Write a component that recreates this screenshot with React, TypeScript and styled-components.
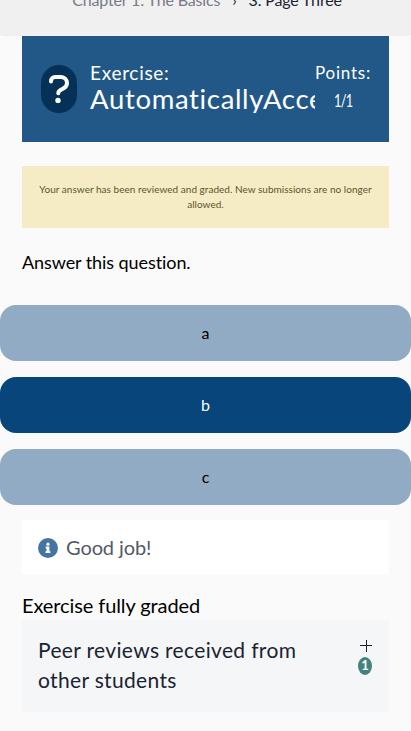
import React from "react";
import styled, { createGlobalStyle } from "styled-components";

const GlobalStyle = createGlobalStyle`
  * { box-sizing: border-box; }
  body {
    margin: 0;
    background: #fafafa;
    color: #000;
    font-family: Lato, "Open Sans", sans-serif;
    font-variant-ligatures: none;
  }
`;

const Page = styled.div`
  height: 731px;
  overflow: hidden;
  background: #fafafa;
`;

const Breadcrumbs = styled.nav`
  height: 36px;
  display: flex;
  justify-content: center;
  padding-left: 3px;
  background: #f0f0f0;
  border-radius: 0 0 3px 3px;
  font-size: 16px;
  line-height: 24px;
  letter-spacing: -0.16px;
  white-space: pre;
`;

const Crumb = styled.span<{ $muted?: boolean }>`
  margin-top: -12px;
  color: ${(p) => (p.$muted ? "#767b85" : "#1a2333")};
`;

const Separator = styled(Crumb)`
  margin-left: 12px;
  margin-right: 12px;
`;

const Content = styled.main`
  padding: 0 22px;
`;

const Header = styled.header`
  height: 106px;
  display: flex;
  align-items: center;
  padding: 0 18px 0 19px;
  background: #215887;
  color: #fff;
`;

const HelpBadge = styled.div`
  flex: none;
  width: 36px;
  height: 48px;
  margin-right: 13px;
  border-radius: 18px;
  background: #063157;
`;

const Heading = styled.h2`
  width: 225px;
  margin: -5px 0 0;
  overflow: hidden;
  white-space: nowrap;
  font-weight: 400;
`;

const Kind = styled.span`
  display: block;
  font-size: 19px;
  line-height: 23px;
  letter-spacing: 0.7px;
`;

const Name = styled.span`
  display: block;
  font-size: 27.5px;
  line-height: 29px;
  letter-spacing: 0.66px;
`;

const Points = styled.div`
  flex: none;
  width: 56px;
  display: flex;
  flex-direction: column;
  align-items: center;
  margin-top: -5px;
  font-size: 17px;
  line-height: 28px;
  letter-spacing: 0.8px;
  white-space: nowrap;
`;

const Score = styled.span`
  font-size: 17px;
  letter-spacing: -1px;
  transform: scaleX(0.75);
`;

const Notice = styled.p`
  height: 62px;
  margin: 24px 0 0;
  padding: 16px;
  background: #f5ecc5;
  color: #5c542b;
  font-size: 10px;
  line-height: 15px;
  letter-spacing: 0.025px;
  text-align: center;
`;

const Question = styled.p`
  margin: 20px 0 29px;
  font-size: 18px;
  line-height: 28px;
  letter-spacing: -0.08px;
`;

const Options = styled.div`
  display: grid;
  gap: 16px;
  margin: 0 -22px 15px;
`;

const Option = styled.button<{ $selected?: boolean }>`
  height: 56px;
  padding: 0 0 2px;
  border: 0;
  border-radius: 16px;
  background: ${(p) => (p.$selected ? "#07457a" : "#92abc4")};
  color: ${(p) => (p.$selected ? "#fff" : "#000")};
  font: 16px Lato, sans-serif;
`;

const Feedback = styled.div`
  height: 54px;
  display: flex;
  align-items: center;
  gap: 8px;
  padding: 2px 16px 0;
  background: #fff;
  color: #535a66;
  font-size: 20px;
  letter-spacing: -0.1px;

  span {
    padding-bottom: 2px;
  }
`;

const Status = styled.p`
  margin: 17px 0 1px;
  font-size: 20px;
  line-height: 28px;
  letter-spacing: -0.1px;
`;

const Reviews = styled.section`
  height: 92px;
  display: flex;
  justify-content: space-between;
  padding: 15px 16px;
  background: #f5f6f7;
  color: #1a2333;
`;

const ReviewsTitle = styled.h3`
  width: 280px;
  margin: 0;
  font-size: 21px;
  font-weight: 400;
  line-height: 30px;
  letter-spacing: 0.34px;
`;

const Toggle = styled.div`
  display: flex;
  flex-direction: column;
  align-items: center;
  width: 16px;
  padding-top: 4px;
`;

const PlusIcon = styled.svg`
  margin-left: 1px;
`;

const Count = styled.span`
  width: 14px;
  height: 18px;
  margin-top: 4px;
  border-radius: 50%;
  background: #44827e;
  color: #fff;
  font-size: 13px;
  font-weight: 700;
  line-height: 17px;
  text-align: center;
`;

const choices = ["a", "b", "c"];

export default function App() {
  return (
    <Page>
      <GlobalStyle />
      <Breadcrumbs>
        <Crumb $muted>Chapter 1: The Basics</Crumb>
        <Separator>›</Separator>
        <Crumb>3. Page Three</Crumb>
      </Breadcrumbs>
      <Content>
        <Header>
          <HelpBadge>
            <svg width="36" height="48" viewBox="0 0 36 48" fill="none">
              <path
                d="M10 16.4c0-2.5 1.8-4.4 4.3-4.4h5.2c3.7 0 6.5 2.6 6.5 6 0 2.4-1.2 4.1-3.3 5.3l-3.1 1.7c-1.5.8-2.3 1.8-2.3 3.3"
                stroke="#fff"
                strokeWidth="4"
                strokeLinecap="round"
                strokeLinejoin="round"
              />
              <circle cx="17" cy="35.4" r="2.7" fill="#fff" />
            </svg>
          </HelpBadge>
          <Heading>
            <Kind>Exercise:</Kind>
            <Name>AutomaticallyAccepted</Name>
          </Heading>
          <Points>
            <span>Points:</span>
            <Score>1/1</Score>
          </Points>
        </Header>
        <Notice>
          Your answer has been reviewed and graded. New submissions are no longer allowed.
        </Notice>
        <Question>Answer this question.</Question>
        <Options>
          {choices.map((choice) => (
            <Option key={choice} $selected={choice === "b"}>
              {choice}
            </Option>
          ))}
        </Options>
        <Feedback>
          <svg width="20" height="20" viewBox="0 0 20 20">
            <circle cx="10" cy="10" r="10" fill="#44749f" />
            <circle cx="10" cy="6.2" r="1.6" fill="#fff" />
            <path d="M7.7 8.6h3.7v4.6h1v1.8H7.5v-1.8h1.1v-2.8h-.9z" fill="#fff" />
          </svg>
          <span>Good job!</span>
        </Feedback>
        <Status>Exercise fully graded</Status>
        <Reviews>
          <ReviewsTitle>Peer reviews received from other students</ReviewsTitle>
          <Toggle>
            <PlusIcon width="14" height="14" viewBox="0 0 14 14" stroke="#1a2333">
              <path d="M1 6.5h12M7.5 1v12" />
            </PlusIcon>
            <Count>1</Count>
          </Toggle>
        </Reviews>
      </Content>
    </Page>
  );
}
